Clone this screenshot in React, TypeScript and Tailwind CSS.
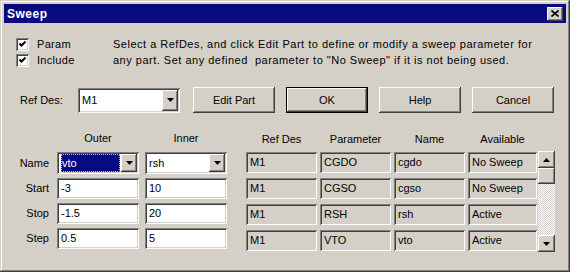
import React from "react";

const FONT = "font-['Liberation_Sans',Arial,sans-serif]";
const RAISED =
  "shadow-[inset_-1px_-1px_#404040,inset_1px_1px_#ffffff,inset_-2px_-2px_#808080,inset_2px_2px_#d4d0c8]";
const SUNKEN =
  "shadow-[inset_1px_1px_#808080,inset_-1px_-1px_#ffffff,inset_2px_2px_#404040,inset_-2px_-2px_#d4d0c8]";

function DownTri() {
  return (
    <svg width="7" height="4" viewBox="0 0 7 4">
      <polygon points="0,0 7,0 3.5,4" fill="#000" />
    </svg>
  );
}

function UpTri() {
  return (
    <svg width="7" height="4" viewBox="0 0 7 4">
      <polygon points="0,4 7,4 3.5,0" fill="#000" />
    </svg>
  );
}

function CheckBox({ label }: { label: string }) {
  return (
    <div className="flex h-[16px] items-center">
      <div className={`flex h-[13px] w-[13px] items-center justify-center bg-white ${SUNKEN}`}>
        <svg width="7" height="7" viewBox="0 0 7 7">
          <polyline points="0.5,2.5 2.5,4.5 6.5,0.5" fill="none" stroke="#000" strokeWidth="2" />
        </svg>
      </div>
      <span className="ml-[8px] text-[11px] tracking-[0.3px] text-black">{label}</span>
    </div>
  );
}

function Combo({
  value,
  width,
  height,
  selected,
}: {
  value: string;
  width: string;
  height: string;
  selected?: boolean;
}) {
  return (
    <div className={`flex items-stretch bg-white p-[2px] ${width} ${height} ${SUNKEN}`}>
      <div className="flex flex-1 items-center pl-[2px] pr-[1px]">
        {selected ? (
          <div className="flex h-full w-full items-center bg-[#0a0a80] pl-[1px] text-white outline outline-1 outline-dotted outline-[#c0c0c0] -outline-offset-1">
            {value}
          </div>
        ) : (
          <span>{value}</span>
        )}
      </div>
      <div className={`flex w-[16px] items-center justify-center bg-[#d4d0c8] ${RAISED}`}>
        <DownTri />
      </div>
    </div>
  );
}

function Edit({ value }: { value: string }) {
  return (
    <div className={`flex h-[21px] w-[82px] items-center bg-white pl-[4px] ${SUNKEN}`}>{value}</div>
  );
}

function Cell({ value }: { value: string }) {
  return (
    <div className={`flex h-[21px] items-center bg-[#d4d0c8] pl-[4px] ${SUNKEN}`}>{value}</div>
  );
}

function Button({ label, def }: { label: string; def?: boolean }) {
  if (def) {
    return (
      <div className="h-[26px] w-[82px] border border-black">
        <div className={`flex h-full w-full items-center justify-center ${RAISED}`}>{label}</div>
      </div>
    );
  }
  return (
    <div className={`flex h-[26px] w-[82px] items-center justify-center ${RAISED}`}>{label}</div>
  );
}

export default function App() {
  const rows = [
    ["M1", "CGDO", "cgdo", "No Sweep"],
    ["M1", "CGSO", "cgso", "No Sweep"],
    ["M1", "RSH", "rsh", "Active"],
    ["M1", "VTO", "vto", "Active"],
  ];
  const left: [string, string, string][] = [
    ["Start", "-3", "10"],
    ["Stop", "-1.5", "20"],
    ["Step", "0.5", "5"],
  ];
  return (
    <div
      className={`${FONT} flex h-[272px] w-[570px] flex-col bg-[#d4d0c8] p-[4px] text-[11px] text-black shadow-[inset_-1px_-1px_#404040,inset_1px_1px_#d4d0c8,inset_-2px_-2px_#808080,inset_2px_2px_#ffffff]`}
    >
      {/* Title bar */}
      <div className="flex h-[19px] items-center justify-between bg-[#0a0a80] pl-[3px] pr-[3px]">
        <span className="text-[12px] font-bold tracking-[0.5px] text-white">Sweep</span>
        <div className={`flex h-[14px] w-[16px] items-center justify-center bg-[#d4d0c8] ${RAISED}`}>
          <svg width="8" height="7" viewBox="0 0 8 7">
            <path d="M0.5 0.5 L7.5 6.5 M7.5 0.5 L0.5 6.5" stroke="#000" strokeWidth="1.6" />
          </svg>
        </div>
      </div>

      {/* Checkboxes + description */}
      <div className="mt-[13px] flex pl-[12px]">
        <div className="flex w-[97px] flex-col">
          <CheckBox label="Param" />
          <CheckBox label="Include" />
        </div>
        <div className="flex flex-col leading-[16px] tracking-[0.5px]">
          <span>Select a RefDes, and click Edit Part to define or modify a sweep parameter for</span>
          <span>any part. Set any defined&nbsp; parameter to "No Sweep" if it is not being used.</span>
        </div>
      </div>

      {/* Ref Des row */}
      <div className="mt-[19px] flex items-center pl-[16px]">
        <span className="w-[58px]">Ref Des:</span>
        <Combo value="M1" width="w-[102px]" height="h-[25px]" />
        <div className="ml-[13px] flex gap-[11px]">
          <Button label="Edit Part" />
          <Button label="OK" def />
          <Button label="Help" />
          <Button label="Cancel" />
        </div>
      </div>

      {/* Table area */}
      <div className="mt-[18px] flex">
        {/* Left */}
        <div className="flex flex-col">
          <div className="flex h-[14px] items-center">
            <div className="w-[53px]" />
            <div className="w-[82px] text-center">Outer</div>
            <div className="ml-[6px] w-[82px] text-center">Inner</div>
          </div>
          <div className="mt-[7px] flex flex-col gap-[4px]">
            <div className="flex items-center">
              <div className="w-[45px] text-right">Name</div>
              <div className="ml-[8px]">
                <Combo value="vto" width="w-[82px]" height="h-[22px]" selected />
              </div>
              <div className="ml-[6px]">
                <Combo value="rsh" width="w-[82px]" height="h-[22px]" />
              </div>
            </div>
            {left.map(([l, a, b]) => (
              <div key={l} className="flex items-center">
                <div className="w-[45px] text-right">{l}</div>
                <div className="ml-[8px]">
                  <Edit value={a} />
                </div>
                <div className="ml-[6px]">
                  <Edit value={b} />
                </div>
              </div>
            ))}
          </div>
        </div>

        {/* Right */}
        <div className="ml-[19px] flex flex-col">
          <div className="grid h-[14px] grid-cols-[71px_71px_71px_69px] items-center gap-x-[3px]">
            <div className="text-center">Ref Des</div>
            <div className="text-center">Parameter</div>
            <div className="text-center">Name</div>
            <div className="text-center">Available</div>
          </div>
          <div className="mt-[7px] flex">
            <div className="grid grid-cols-[71px_71px_71px_69px] gap-x-[3px] gap-y-[4px]">
              {rows.map((r, i) =>
                r.map((v, j) => <Cell key={`${i}-${j}`} value={v} />)
              )}
            </div>
            <div className="ml-[1px] -mt-[1px] flex h-[101px] w-[17px] flex-col">
              <div className={`flex h-[17px] w-[17px] items-center justify-center bg-[#d4d0c8] ${RAISED}`}>
                <UpTri />
              </div>
              <div className={`h-[16px] w-[17px] bg-[#d4d0c8] ${RAISED}`} />
              <div className="flex-1 bg-[image:repeating-conic-gradient(#ffffff_0_25%,#d4d0c8_0_50%)] bg-[length:2px_2px]" />
              <div className={`flex h-[17px] w-[17px] items-center justify-center bg-[#d4d0c8] ${RAISED}`}>
                <DownTri />
              </div>
            </div>
          </div>
        </div>
      </div>
    </div>
  );
}
